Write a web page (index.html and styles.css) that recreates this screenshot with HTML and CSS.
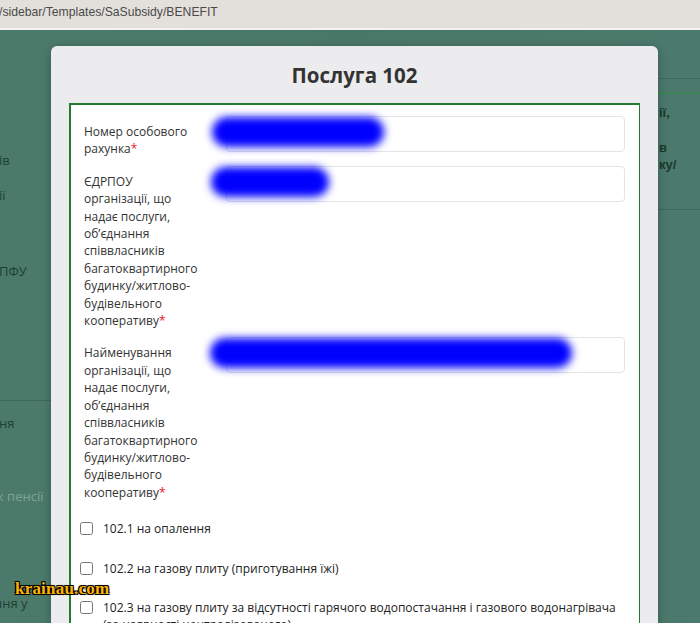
FILE: index.html
```html
<!DOCTYPE html>
<html lang="uk">
<head>
<meta charset="utf-8">
<title>Послуга 102</title>
<link rel="stylesheet" href="styles.css">
</head>
<body>
<div class="urlbar"><span class="url">/sidebar/Templates/SaSubsidy/BENEFIT</span></div>
<div class="page">
  <div class="bg-line bl-left"></div>
  <div class="bg-line bl-right1"></div>
  <div class="bg-line bl-right2 green"></div>
  <div class="bg-line bl-right3"></div>
  <span class="bgt t1">ів</span>
  <span class="bgt t2">ії</span>
  <span class="bgt t3">ПФУ</span>
  <span class="bgt t4">ня</span>
  <span class="bgt t5 faded">к пенсії</span>
  <span class="bgt t6">ння у</span>
  <span class="bgt r1 bold">ії,</span>
  <span class="bgt r2 bold">в</span>
  <span class="bgt r3 bold">ку/</span>

  <div class="modal">
    <h2 class="title">Послуга 102</h2>
    <div class="panel">
      <div class="row">
        <label class="lbl">Номер особового рахунка<span class="req">*</span></label>
        <div class="field"><input class="inp" type="text"><span class="blob b1"></span></div>
      </div>
      <div class="row">
        <label class="lbl">ЄДРПОУ організації, що надає послуги, об’єднання співвласників багатоквартирного будинку/житлово-будівельного кооперативу<span class="req">*</span></label>
        <div class="field"><input class="inp" type="text"><span class="blob b2"></span></div>
      </div>
      <div class="row">
        <label class="lbl">Найменування організації, що надає послуги, об’єднання співвласників багатоквартирного будинку/житлово-будівельного кооперативу<span class="req">*</span></label>
        <div class="field"><input class="inp" type="text"><span class="blob b3"></span></div>
      </div>
      <div class="checks">
        <label class="chk"><input type="checkbox" class="box"><span>102.1 на опалення</span></label>
        <label class="chk"><input type="checkbox" class="box"><span>102.2 на газову плиту (приготування їжі)</span></label>
        <label class="chk"><input type="checkbox" class="box"><span>102.3 на газову плиту за відсутності гарячого водопостачання і газового водонагрівача (за наявності централізованого)</span></label>
      </div>
    </div>
  </div>
  <div class="watermark">krainau.com</div>
</div>
</body>
</html>
```
FILE: styles.css
```css
html, body {
  margin: 0;
  padding: 0;
}
body {
  width: 700px;
  height: 623px;
  overflow: hidden;
  font-family: "Open Sans", "Noto Sans", sans-serif;
  background: #4a7869;
}
.urlbar {
  height: 28px;
  background: #e3e0dc;
  border-bottom: 2px solid #f3f2f0;
  display: flex;
  align-items: center;
}
.url {
  font-family: "Liberation Sans", Arial, sans-serif;
  font-size: 12.2px;
  color: #4a4a4a;
  margin-left: -1px;
  margin-top: -5px;
}
.page {
  position: relative;
  height: 593px;
  background: linear-gradient(90deg, #4b7a6b 0%, #4a7868 50%, #4b796b 100%);
}
.bg-line {
  position: absolute;
  height: 1px;
  background: #3e6a5b;
}
.bl-left { left: 0; width: 52px; top: 370px; }
.bl-right1 { left: 658px; width: 42px; top: 48px; }
.bl-right2 { left: 658px; width: 42px; top: 63px; }
.bl-right2.green { background: #2f8a45; }
.bl-right3 { left: 658px; width: 42px; top: 179px; }
.bgt {
  position: absolute;
  font-size: 13px;
  line-height: 16px;
  color: #1d4034;
  white-space: nowrap;
}
.bgt.faded { color: #7ea596; }
.bgt.bold { font-weight: 700; font-family: "Liberation Sans", Arial, sans-serif; color: #1a3a2f; }
.t1 { left: -1px; top: 122px; }
.t2 { left: -1px; top: 157px; }
.t3 { left: -1px; top: 233px; }
.t4 { left: -1px; top: 385px; }
.t5 { left: -3px; top: 458px; }
.t6 { left: -6px; top: 565px; }
.r1 { left: 659px; top: 75px; }
.r2 { left: 659px; top: 110px; }
.r3 { left: 659px; top: 127px; }

.modal {
  position: absolute;
  left: 51px;
  top: 16px;
  width: 571px;
  padding: 18px 18px 40px;
  background: #ececee;
  border-radius: 6px;
  box-shadow: 0 2px 10px rgba(0, 0, 0, 0.25);
  min-height: 620px;
}
.title {
  margin: 0 0 17px;
  text-align: center;
  font-size: 20.5px;
  line-height: 22px;
  font-weight: 700;
  color: #333;
}
.panel {
  background: #fff;
  border: 2px solid #247a30;
  border-right-width: 1px;
  padding: 11px 14px 20px 13px;
}
.row {
  display: grid;
  grid-template-columns: 142px 1fr;
  margin-bottom: 8px;
}
.lbl {
  display: block;
  width: 114px;
  padding-top: 7px;
  font-size: 12px;
  line-height: 17.4px;
  color: #333;
}
.req { color: #e8192c; }
.field {
  position: relative;
}
.inp {
  display: block;
  box-sizing: border-box;
  width: 100%;
  height: 36px;
  border: 1px solid #e4e4e4;
  border-radius: 4px;
  background: #fff;
  margin: 0;
}
.blob {
  position: absolute;
  height: 30px;
  border-radius: 16px;
  background: #0000ff;
  filter: blur(4px);
}
.b1 { left: -14px; top: 1px; width: 172px; }
.b2 { left: -15px; top: 1px; width: 118px; }
.b3 { left: -16px; top: 1px; width: 362px; }

.checks {
  display: flex;
  flex-direction: column;
  margin-left: -4px;
  margin-top: 2px;
}
.chk {
  display: flex;
  align-items: flex-start;
  padding: 11px 0;
  font-size: 12px;
  line-height: 17.4px;
  color: #222;
}
.box {
  width: 13px;
  height: 13px;
  margin: 2px 10px 0 0;
  flex: none;
}
.watermark {
  position: absolute;
  left: 15px;
  top: 549px;
  font-family: "Liberation Serif", "DejaVu Serif", serif;
  font-weight: 700;
  font-size: 17px;
  letter-spacing: 0.2px;
  color: #ffb400;
  text-shadow: -1px -1px 0 #000, 1px -1px 0 #000, -1px 1px 0 #000, 1px 1px 0 #000, 0 0 2px #000;
}
```
